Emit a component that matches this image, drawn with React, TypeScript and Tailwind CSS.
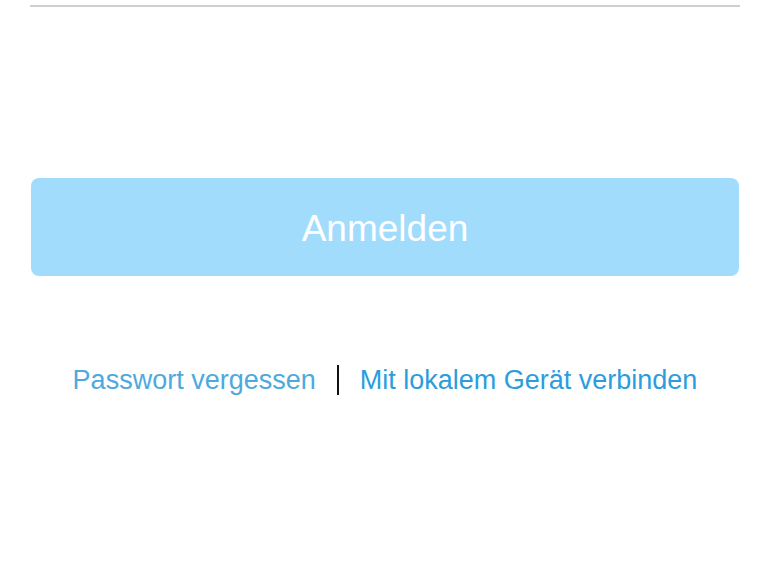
export default function App() {
  return (
    <div className="w-[770px] h-[578px] bg-white overflow-hidden" style={{ fontFamily: '"Liberation Sans", Arial, sans-serif' }}>
      <div className="px-[30px] pt-[5px]">
        <div className="h-[2px] bg-[#cfcfcf]" />
      </div>

      <div className="px-[31px] mt-[171px]">
        <button className="w-full h-[98px] pt-[3px] rounded-[8px] bg-[#a2dcfd] text-white text-[37px] flex items-center justify-center">
          Anmelden
        </button>
      </div>

      <div className="mt-[89px] flex items-center justify-center">
        <a className="text-[27px] text-[#4ea9dd] leading-none">Passwort vergessen</a>
        <span className="mx-[21px] w-[2px] h-[30px] bg-[#111]" />
        <a className="text-[27px] text-[#2b9ddc] leading-none">Mit lokalem Gerät verbinden</a>
      </div>
    </div>
  );
}
